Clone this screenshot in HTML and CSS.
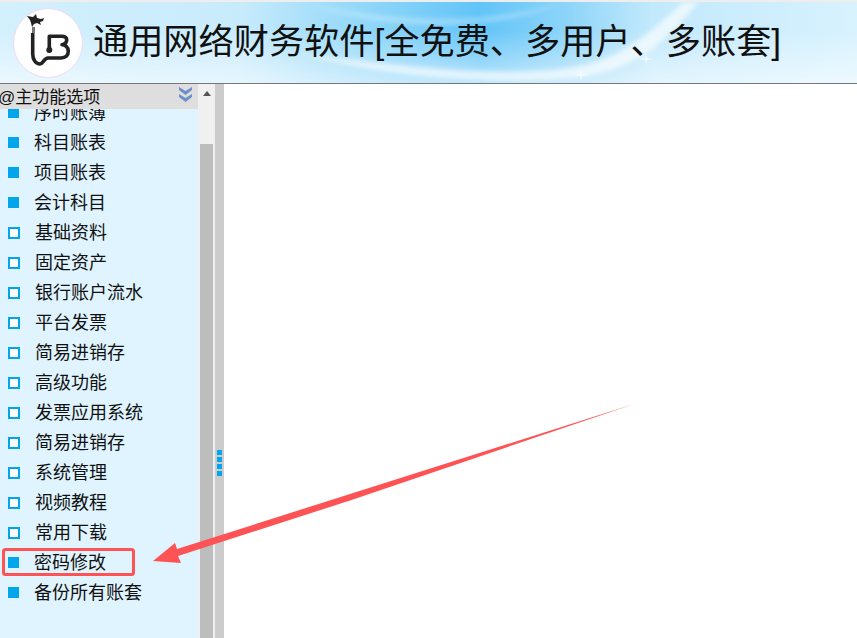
FILE: index.html
```html
<!DOCTYPE html>
<html lang="zh-CN">
<head>
    <meta charset="UTF-8">
    <title>通用网络财务软件</title>
    <link rel="stylesheet" href="styles.css">
</head>
<body>
    <header class="banner">
        <svg class="banner-bg" width="857" height="81" viewBox="0 0 857 81" preserveAspectRatio="none">
            <defs>
                <linearGradient id="sky">
                    <stop offset="0" stop-color="#d3f0fd"/>
                    <stop offset=".28" stop-color="#c8ebfc"/>
                    <stop offset=".42" stop-color="#93d8f9"/>
                    <stop offset=".56" stop-color="#62c4f8"/>
                    <stop offset=".66" stop-color="#8cd4f9"/>
                    <stop offset=".76" stop-color="#c2e9fc"/>
                    <stop offset="1" stop-color="#d8f2fe"/>
                </linearGradient>
                <linearGradient id="fade" x1="0" y1="0" x2="0" y2="1">
                    <stop offset=".35" stop-color="#fff" stop-opacity="0"/>
                    <stop offset="1" stop-color="#fff" stop-opacity=".55"/>
                </linearGradient>
                <filter id="soft"><feGaussianBlur stdDeviation="2.4"/></filter>
            </defs>
            <rect width="857" height="81" fill="url(#sky)"/>
            <rect width="857" height="81" fill="url(#fade)"/>
            <path d="M300 52C400 64 500 76 570 66 622 58 650 30 684 0H698C668 36 640 66 582 75 480 86 380 72 300 52Z" fill="#fff" opacity=".65" filter="url(#soft)"/>
            <path d="M310 3C400 22 490 22 560 2 490 30 390 28 310 3Z" fill="#fff" opacity=".35" filter="url(#soft)"/>
            <path d="M580 72l1-6 1 6 7 1-7 1-1 6-1-6-7-1zM645 56l1-6 1 6 7 1-7 1-1 6-1-6-7-1z" fill="#fff" opacity=".6"/>
        </svg>
        <div class="logo">
            <svg width="68" height="68" viewBox="14 9 68 68">
                <path d="M27 16l6 1 3-3 1 4 4 1 3-1-1 3-3 1 1 3-4-2-3 1-2 3-1-4-1-3z" fill="#222"/>
                <path d="M32 27h3v6h-3z" fill="#777"/>
                <path class="logo-line" d="M32.7 33V54C32.7 60 36 64 40 64 43 64 44 58 48 58H61C66 58 68.3 55 68.3 51.3 68.3 47 65 44.7 62 44.7 65 44 66.7 42 66.7 40 66.7 37.5 64.5 36.3 61.7 36.3H49.3V49.7"/>
                <circle cx="49.3" cy="50" r="3" fill="#222"/>
            </svg>
        </div>
        <h1 class="title">通用网络财务软件[全免费、多用户、多账套]</h1>
    </header>

    <div class="main">
        <aside class="side">
            <div class="side-panel">
                <div class="side-head">
                    <span class="side-title">@主功能选项</span>
                    <svg class="collapse" width="13" height="15" viewBox="0 0 13 15">
                        <path d="M0 0l6.5 4L13 0v3L6.5 8 0 3z" fill="#6f8fcb"/>
                        <path d="M0 7l6.5 4L13 7v3l-6.5 5L0 10z" fill="#6f8fcb"/>
                    </svg>
                </div>
                <div class="menu-view">
                    <ul class="menu">
                        <li class="menu-item"><i class="dot"></i>序时账簿</li>
                        <li class="menu-item"><i class="dot"></i>科目账表</li>
                        <li class="menu-item"><i class="dot"></i>项目账表</li>
                        <li class="menu-item"><i class="dot"></i>会计科目</li>
                        <li class="menu-item group"><i class="dot"></i>基础资料</li>
                        <li class="menu-item group"><i class="dot"></i>固定资产</li>
                        <li class="menu-item group"><i class="dot"></i>银行账户流水</li>
                        <li class="menu-item group"><i class="dot"></i>平台发票</li>
                        <li class="menu-item group"><i class="dot"></i>简易进销存</li>
                        <li class="menu-item group"><i class="dot"></i>高级功能</li>
                        <li class="menu-item group"><i class="dot"></i>发票应用系统</li>
                        <li class="menu-item group"><i class="dot"></i>简易进销存</li>
                        <li class="menu-item group"><i class="dot"></i>系统管理</li>
                        <li class="menu-item group"><i class="dot"></i>视频教程</li>
                        <li class="menu-item group"><i class="dot"></i>常用下载</li>
                        <li class="menu-item"><i class="dot"></i>密码修改</li>
                        <li class="menu-item"><i class="dot"></i>备份所有账套</li>
                    </ul>
                </div>
            </div>
            <div class="scrollbar">
                <div class="scroll-up"></div>
                <div class="scroll-thumb"></div>
            </div>
        </aside>
        <div class="splitter">
            <span></span><span></span><span></span><span></span>
        </div>
        <div class="content"></div>
    </div>

    <!-- annotation drawn on top of the screenshot -->
    <svg class="annotation" width="857" height="638" viewBox="0 0 857 638">
        <rect x="3.5" y="549.5" width="130" height="25" rx="2" fill="none" stroke="#fd5355" stroke-width="3"/>
        <path d="M634 404L350 494 177 549 175 543 153 561 181 563 178 556 350 500.5z" fill="#fd5355"/>
    </svg>
</body>
</html>
```

FILE: styles.css
```css
html, body {
    margin: 0;
    height: 100%;
    overflow: hidden;
}
body {
    position: relative;
    font-family: "Liberation Sans", "Noto Sans CJK SC", sans-serif;
    background-color: #fff;
    color: #111;
}
.banner {
    box-sizing: border-box;
    position: relative;
    height: 84px;
    padding-left: 13px;
    display: flex;
    align-items: center;
    border-top: 2px solid #eee;
    border-bottom: 1px solid #777;
    background-color: #d4effd;
}
.banner-bg {
    position: absolute;
    top: 0;
    left: 0;
}
.logo {
    box-sizing: border-box;
    position: relative;
    width: 70px;
    height: 70px;
    border: 1px solid #efd8f8;
    border-radius: 50%;
    background-color: #fff;
    flex-shrink: 0;
}
.logo svg {
    display: block;
}
.logo-line {
    fill: none;
    stroke: #222;
    stroke-width: 3.6;
    stroke-linejoin: round;
}
.title {
    position: relative;
    margin: 0 0 8px 10px;
    font-size: 35.2px;
    font-weight: normal;
    white-space: nowrap;
}
.main {
    display: flex;
    height: 554px;
}
.side {
    display: flex;
    flex-shrink: 0;
}
.side-panel {
    width: 198px;
    background-color: #dff4ff;
}
.side-head {
    box-sizing: border-box;
    height: 25px;
    padding-right: 6px;
    font-size: 17px;
    display: flex;
    justify-content: space-between;
    align-items: flex-start;
    background-color: #dedede;
    position: relative;
    z-index: 1;
}
.side-title {
    margin-left: -2px;
    line-height: 27px;
}
.collapse {
    margin-top: 3px;
}
.menu-view {
    height: 529px;
    overflow: hidden;
}
.menu {
    list-style: none;
    margin: -11px 0 0;
    padding: 0;
}
.menu-item {
    height: 30px;
    line-height: 30px;
    font-size: 18px;
    display: flex;
    align-items: center;
}
.dot {
    width: 11px;
    height: 11px;
    margin: -1px 15px 0 8px;
    background-color: #00a5ec;
    flex-shrink: 0;
}
.group .dot {
    box-sizing: border-box;
    width: 12px;
    height: 12px;
    border: 2px solid #00a5ec;
    background-color: #fff;
}
.scrollbar {
    box-sizing: border-box;
    width: 17px;
    padding: 0 2px;
    background-color: #f0f0f0;
}
.scroll-up {
    width: 0;
    height: 0;
    margin: 7px auto 0;
    border-left: 4px solid transparent;
    border-right: 4px solid transparent;
    border-bottom: 5px solid #555;
}
.scroll-thumb {
    height: 494px;
    margin-top: 48px;
    background-color: #bdbdbd;
}
.splitter {
    box-sizing: border-box;
    width: 9px;
    padding: 366px 2px 0 2px;
    background-color: #ccc;
    display: flex;
    flex-direction: column;
    gap: 2px;
}
.splitter span {
    height: 5px;
    background-color: #00a5ec;
}
.content {
    flex: 1;
}
.annotation {
    position: absolute;
    top: 0;
    left: 0;
}
```
